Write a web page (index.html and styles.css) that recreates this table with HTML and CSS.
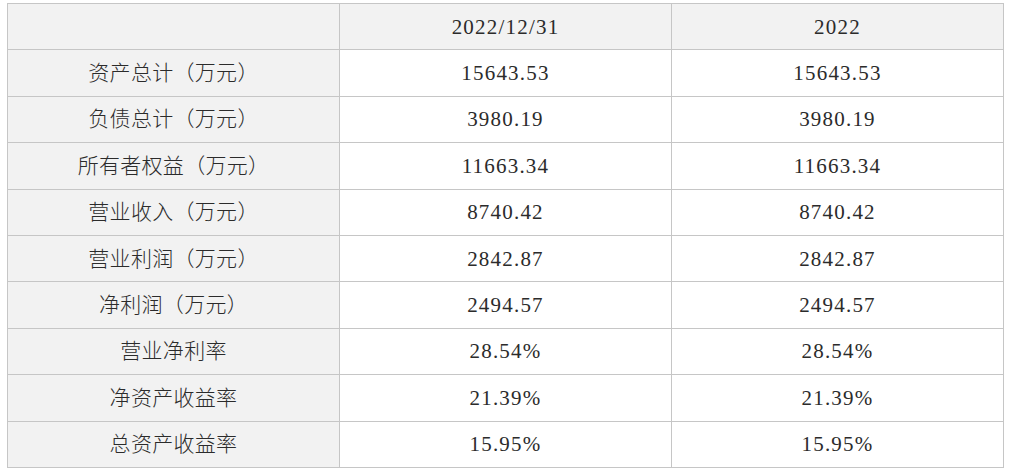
FILE: index.html
```html
<!DOCTYPE html>
<html lang="zh-CN">
<head>
<meta charset="utf-8">
<link rel="stylesheet" href="styles.css">
</head>
<body>
<table class="fin">
  <thead>
    <tr><th class="label"></th><th class="num">2022/12/31</th><th class="num">2022</th></tr>
  </thead>
  <tbody>
    <tr><td class="label">资产总计（万元）</td><td class="num">15643.53</td><td class="num">15643.53</td></tr>
    <tr><td class="label">负债总计（万元）</td><td class="num">3980.19</td><td class="num">3980.19</td></tr>
    <tr><td class="label">所有者权益（万元）</td><td class="num">11663.34</td><td class="num">11663.34</td></tr>
    <tr><td class="label">营业收入（万元）</td><td class="num">8740.42</td><td class="num">8740.42</td></tr>
    <tr><td class="label">营业利润（万元）</td><td class="num">2842.87</td><td class="num">2842.87</td></tr>
    <tr><td class="label">净利润（万元）</td><td class="num">2494.57</td><td class="num">2494.57</td></tr>
    <tr><td class="label">营业净利率</td><td class="num">28.54%</td><td class="num">28.54%</td></tr>
    <tr><td class="label">净资产收益率</td><td class="num">21.39%</td><td class="num">21.39%</td></tr>
    <tr><td class="label">总资产收益率</td><td class="num">15.95%</td><td class="num">15.95%</td></tr>
  </tbody>
</table>
</body>
</html>
```

FILE: styles.css
```css
html, body {
  margin: 0;
  padding: 0;
  background: #ffffff;
}
body {
  padding: 3px 0 0 7px;
}
.fin {
  border-collapse: collapse;
  width: 997px;
  table-layout: fixed;
  font-family: "Liberation Serif", "Noto Sans CJK SC", serif;
  font-size: 20px;
  color: #2b2b2b;
}
.fin th, .fin td {
  border: 1px solid #c6c6c6;
  text-align: center;
  vertical-align: middle;
  padding: 0;
  font-weight: normal;
  height: 45.4px;
  line-height: 24px;
}
.fin thead th {
  background: #f2f2f2;
}
.fin td {
  background: #ffffff;
}
.fin td.label {
  background: #f2f2f2;
  font-size: 21px;
  font-weight: 300;
  letter-spacing: 0.3px;
}
.fin .num {
  font-size: 21px;
  letter-spacing: 1.2px;
}
```
